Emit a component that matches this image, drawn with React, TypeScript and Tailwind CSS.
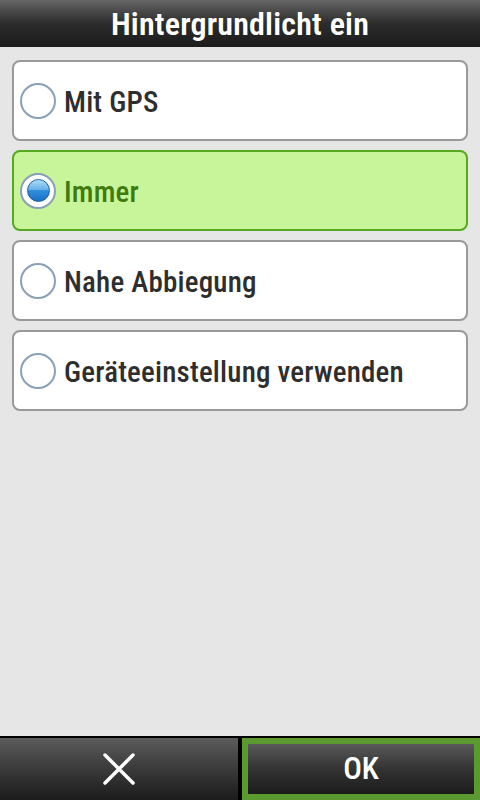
import { useState } from "react";

const options = ["Mit GPS", "Immer", "Nahe Abbiegung", "Geräteeinstellung verwenden"];

// Roboto is variable here, so the condensed width comes from font-stretch
const font = { fontFamily: 'Roboto, "Noto Sans", sans-serif', fontStretch: "75%" };

function Radio({ checked }: { checked: boolean }) {
  if (checked) {
    return (
      <div className="w-9 h-9 shrink-0 rounded-full border-2 border-[#8aa0b8] bg-white flex items-center justify-center">
        <div className="w-[23px] h-[23px] rounded-full bg-gradient-to-b from-[#8fd2f8] via-[#2f90dc] to-[#1a70c4] border border-[#1c5f9c] relative overflow-hidden">
          <div className="absolute left-0 right-0 top-0 h-[10px] bg-white/25" />
        </div>
      </div>
    );
  }
  return <div className="w-9 h-9 shrink-0 rounded-full border-2 border-[#8aa0b8] bg-white" />;
}

export default function App() {
  const [selected, setSelected] = useState(1);

  return (
    <div className="w-[480px] h-[800px] flex flex-col bg-[#e6e6e6] overflow-hidden" style={font}>
      <header className="h-[47px] flex items-center justify-center bg-gradient-to-b from-[#666666] via-[#2c2c2c] to-[#1c1c1c]">
        <h1 className="text-white text-[32px] font-semibold leading-none tracking-[0.2px]">Hintergrundlicht ein</h1>
      </header>

      <div className="flex-1 flex flex-col gap-[9px] px-3 pt-[13px]">
        {options.map((o, i) => {
          const on = i === selected;
          return (
            <button
              key={o}
              onClick={() => setSelected(i)}
              className={
                "h-[81px] rounded-lg border-2 flex items-center gap-2 pl-[6px] text-left " +
                (on ? "bg-[#c8f59a] border-[#56a820]" : "bg-white border-[#999999]")
              }
            >
              <Radio checked={on} />
              <span
                className={
                  "pt-1 text-[29px] font-medium tracking-[0.2px] whitespace-nowrap " +
                  (on ? "text-[#3f7a10]" : "text-[#2e2e2e]")
                }
              >
                {o}
              </span>
            </button>
          );
        })}
      </div>

      <footer className="h-[64px] flex border-t-2 border-black bg-black">
        <button className="w-[238px] flex items-center justify-center bg-gradient-to-b from-[#5c5c5c] via-[#3a3a3a] to-[#1c1c1c]">
          <svg width="34" height="32" viewBox="0 0 34 32">
            <path d="M3 2 L31 30 M31 2 L3 30" stroke="white" strokeWidth="3.5" strokeLinecap="round" />
          </svg>
        </button>
        <div className="w-[4px] bg-black" />
        <button className="flex-1 border-[6px] border-[#5a9a30] flex items-center justify-center bg-gradient-to-b from-[#5a5a5a] via-[#333] to-[#1c1c1c]">
          <span className="text-white text-[31px] font-medium">OK</span>
        </button>
      </footer>
    </div>
  );
}
